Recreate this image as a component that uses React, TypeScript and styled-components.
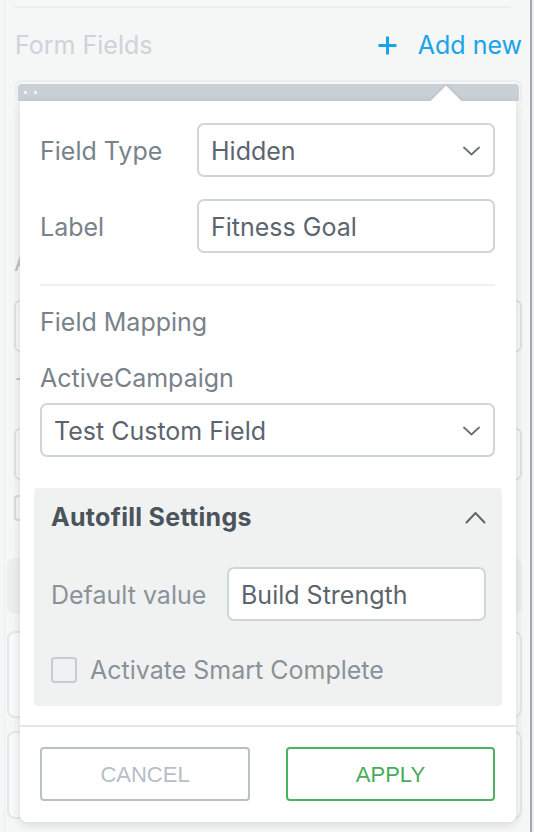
import React from "react";
import styled, { createGlobalStyle } from "styled-components";

const GlobalStyle = createGlobalStyle`
  html, body { margin: 0; padding: 0; }
  body {
    background: #f5f6f6;
    font-family: Inter, "Noto Sans", sans-serif;
    -webkit-font-smoothing: antialiased;
  }
`;

const Page = styled.div`
  width: 534px;
  height: 832px;
  display: flex;
  overflow: hidden;
  background: #f5f6f6;
`;

const Sidebar = styled.div`
  position: relative;
  box-sizing: border-box;
  width: 526px;
  margin-left: 4px;
  border-left: 1px solid #eceeef;
  padding: 6px 8px 0 9px;
  display: flex;
  flex-direction: column;
`;

const RightRule = styled.div`
  width: 2px;
  background: #a4a8aa;
`;

const RightFill = styled.div`
  flex: 1;
  background: #eef0f0;
`;

const TopRule = styled.div`
  height: 2px;
  margin-right: 11px;
  background: #eceff0;
`;

const HeaderRow = styled.div`
  margin-top: 22px;
  height: 30px;
  padding-left: 1px;
  display: flex;
  align-items: center;
  justify-content: space-between;
`;

const SectionTitle = styled.div`
  font-size: 25px;
  line-height: 30px;
  color: #cdd3d9;
`;

const AddNew = styled.div`
  display: flex;
  align-items: center;
  gap: 20px;
  font-size: 25px;
  line-height: 30px;
  color: #1ba3e8;
`;

const FieldCard = styled.div`
  margin-top: 20px;
  margin-left: 1px;
  box-sizing: border-box;
  height: 21px;
  border: 2px solid #eaeef0;
  border-bottom: none;
  border-radius: 6px 6px 0 0;
  padding: 2px 1px 0;
`;

const HandleBar = styled.div`
  height: 17px;
  background: #c9d0d6;
  border-radius: 4px 4px 0 0;
  display: flex;
  align-items: center;
  gap: 7px;
  padding-left: 6px;
`;

const Dot = styled.span`
  width: 3px;
  height: 3px;
  border-radius: 50%;
  background: #ffffff;
`;

const BgLabel = styled.div<{ $top: number }>`
  margin-top: ${(p) => p.$top}px;
  font-size: 24px;
  line-height: 30px;
  color: #b9c1c7;
`;

const BgInput = styled.div<{ $top: number }>`
  margin-top: ${(p) => p.$top}px;
  height: 52px;
  box-sizing: border-box;
  border: 2px solid #dde2e5;
  border-radius: 6px;
  background: #f7f8f8;
`;

const BgCheck = styled.div`
  margin-top: 15px;
  width: 26px;
  height: 26px;
  box-sizing: border-box;
  border: 2px solid #d6dbdf;
  border-radius: 4px;
`;

const BgBlock = styled.div<{ $top: number; $h: number; $gray?: boolean }>`
  margin-top: ${(p) => p.$top}px;
  margin-left: -7px;
  height: ${(p) => p.$h}px;
  box-sizing: border-box;
  border: 2px solid ${(p) => (p.$gray ? "#eceeee" : "#e3e7e9")};
  border-radius: 8px;
  background: ${(p) => (p.$gray ? "#eceeee" : "#f8f9f9")};
`;

const Popup = styled.div`
  position: absolute;
  left: 15px;
  top: 101px;
  width: 496px;
  background: #ffffff;
  border-radius: 3px 3px 7px 7px;
  box-shadow: 0 2px 8px rgba(40, 52, 64, 0.16);
  z-index: 2;

  &::before {
    content: "";
    position: absolute;
    top: -11px;
    left: 415px;
    width: 22px;
    height: 22px;
    background: #ffffff;
    transform: rotate(45deg);
    box-shadow: -1px -1px 2px rgba(40, 52, 64, 0.1);
  }
`;

const PopupBody = styled.div`
  position: relative;
  padding: 22px 21px 19px 20px;
  display: flex;
  flex-direction: column;
`;

const FieldRow = styled.div<{ $top?: number; $col: number }>`
  display: grid;
  grid-template-columns: ${(p) => p.$col}px 1fr;
  align-items: center;
  margin-top: ${(p) => p.$top ?? 0}px;
`;

const Label = styled.div<{ $muted?: boolean }>`
  font-size: 25px;
  line-height: 30px;
  padding-top: 2px;
  color: ${(p) => (p.$muted ? "#8a939a" : "#79828a")};
`;

const Control = styled.div<{ $top?: number }>`
  margin-top: ${(p) => p.$top ?? 0}px;
  height: 54px;
  box-sizing: border-box;
  border: 2px solid #d0d5da;
  border-radius: 7px;
  background: #ffffff;
  display: flex;
  align-items: center;
  justify-content: space-between;
  padding: 2px 13px 0 12px;
  font-size: 25px;
  color: #5c656e;
`;

const Divider = styled.div`
  margin-top: 31px;
  height: 2px;
  background: #eef0f2;
`;

const Heading = styled.div<{ $top: number }>`
  margin-top: ${(p) => p.$top}px;
  font-size: 25px;
  line-height: 30px;
  color: #79828a;
`;

const Panel = styled.div`
  margin: 31px -7px 0 -6px;
  background: #f0f2f2;
  border-radius: 4px;
  padding: 0 16px 21px 17px;
  display: flex;
  flex-direction: column;
`;

const PanelHeader = styled.div`
  height: 58px;
  display: flex;
  align-items: center;
  justify-content: space-between;
`;

const PanelTitle = styled.div`
  font-size: 25px;
  font-weight: 700;
  letter-spacing: 0.3px;
  color: #4b535b;
`;

const CheckRow = styled.label`
  margin-top: 34px;
  height: 30px;
  display: flex;
  align-items: center;
  gap: 13px;
  font-size: 25px;
  color: #8a9299;
`;

const CheckBox = styled.span`
  width: 26px;
  height: 26px;
  box-sizing: border-box;
  border: 2px solid #c6ccd1;
  border-radius: 4px;
`;

const Footer = styled.div`
  border-top: 2px solid #e2e7ea;
  padding: 20px 21px 21px 20px;
  display: grid;
  grid-template-columns: 210px 209px;
  justify-content: space-between;
`;

const Button = styled.button<{ $tone: "muted" | "green" }>`
  height: 54px;
  box-sizing: border-box;
  background: #ffffff;
  border: 2px solid ${(p) => (p.$tone === "green" ? "#4db25f" : "#b9c1c8")};
  border-radius: 4px;
  color: ${(p) => (p.$tone === "green" ? "#46ad57" : "#b6bec6")};
  font-family: "Liberation Sans", Arial, sans-serif;
  font-size: 22px;
  text-transform: uppercase;
  padding: 2px 0 0;
`;

const Chevron = ({ up }: { up?: boolean }) => (
  <svg width={up ? 21 : 17} height={up ? 13 : 10} viewBox={up ? "0 0 21 13" : "0 0 17 10"} fill="none">
    {up ? (
      <polyline points="1.5,11.5 10.5,2 19.5,11.5" stroke="#5e666e" strokeWidth="2" strokeLinecap="round" strokeLinejoin="round" />
    ) : (
      <polyline points="1,1.5 8.5,8.5 16,1.5" stroke="#69727a" strokeWidth="1.8" strokeLinecap="round" strokeLinejoin="round" />
    )}
  </svg>
);

const PlusIcon = () => (
  <svg width="21" height="21" viewBox="0 0 21 21" fill="none">
    <path d="M10.5 1.5v18M1.5 10.5h18" stroke="#1ba3e8" strokeWidth="3" />
  </svg>
);

export default function App() {
  return (
    <Page>
      <GlobalStyle />
      <Sidebar>
        <TopRule />
        <HeaderRow>
          <SectionTitle>Form Fields</SectionTitle>
          <AddNew>
            <PlusIcon />
            <span>Add new</span>
          </AddNew>
        </HeaderRow>
        <FieldCard>
          <HandleBar>
            <Dot />
            <Dot />
          </HandleBar>
        </FieldCard>
        <BgLabel $top={147}>Answers</BgLabel>
        <BgInput $top={22} />
        <BgLabel $top={11}>+</BgLabel>
        <BgInput $top={35} />
        <BgCheck />
        <BgBlock $top={37} $h={56} $gray />
        <BgBlock $top={17} $h={87} />
        <BgBlock $top={13} $h={88} />

        <Popup>
          <PopupBody>
            <FieldRow $col={157}>
              <Label>Field Type</Label>
              <Control>
                <span>Hidden</span>
                <Chevron />
              </Control>
            </FieldRow>
            <FieldRow $col={157} $top={22}>
              <Label>Label</Label>
              <Control>
                <span>Fitness Goal</span>
              </Control>
            </FieldRow>
            <Divider />
            <Heading $top={21}>Field Mapping</Heading>
            <Heading $top={26}>ActiveCampaign</Heading>
            <Control $top={10}>
              <span>Test Custom Field</span>
              <Chevron />
            </Control>
            <Panel>
              <PanelHeader>
                <PanelTitle>Autofill Settings</PanelTitle>
                <Chevron up />
              </PanelHeader>
              <FieldRow $col={176} $top={21}>
                <Label $muted>Default value</Label>
                <Control>
                  <span>Build Strength</span>
                </Control>
              </FieldRow>
              <CheckRow>
                <CheckBox />
                <span>Activate Smart Complete</span>
              </CheckRow>
            </Panel>
          </PopupBody>
          <Footer>
            <Button $tone="muted">Cancel</Button>
            <Button $tone="green">Apply</Button>
          </Footer>
        </Popup>
      </Sidebar>
      <RightRule />
      <RightFill />
    </Page>
  );
}
